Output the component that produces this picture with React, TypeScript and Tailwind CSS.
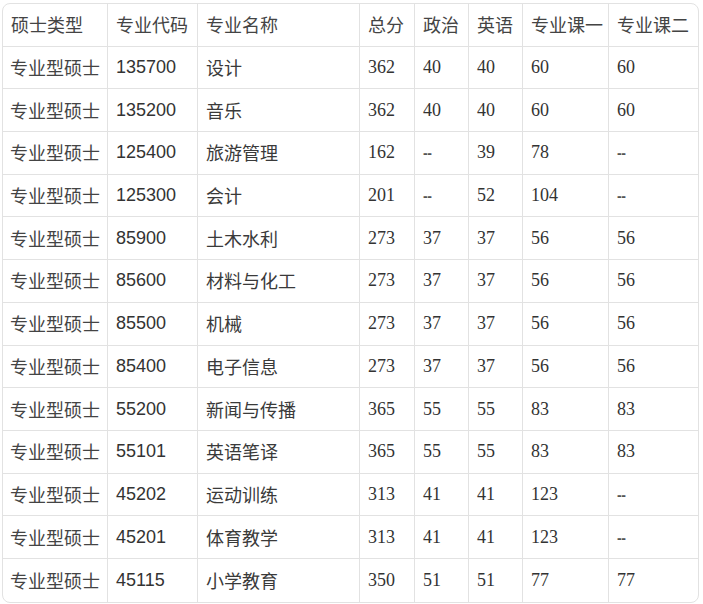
import React from "react"

type Row = {
  type: string
  code: string
  name: string
  total: string
  politics: string
  english: string
  course1: string
  course2: string
}

const rows: Row[] = [
  { type: "专业型硕士", code: "135700", name: "设计", total: "362", politics: "40", english: "40", course1: "60", course2: "60" },
  { type: "专业型硕士", code: "135200", name: "音乐", total: "362", politics: "40", english: "40", course1: "60", course2: "60" },
  { type: "专业型硕士", code: "125400", name: "旅游管理", total: "162", politics: "--", english: "39", course1: "78", course2: "--" },
  { type: "专业型硕士", code: "125300", name: "会计", total: "201", politics: "--", english: "52", course1: "104", course2: "--" },
  { type: "专业型硕士", code: "85900", name: "土木水利", total: "273", politics: "37", english: "37", course1: "56", course2: "56" },
  { type: "专业型硕士", code: "85600", name: "材料与化工", total: "273", politics: "37", english: "37", course1: "56", course2: "56" },
  { type: "专业型硕士", code: "85500", name: "机械", total: "273", politics: "37", english: "37", course1: "56", course2: "56" },
  { type: "专业型硕士", code: "85400", name: "电子信息", total: "273", politics: "37", english: "37", course1: "56", course2: "56" },
  { type: "专业型硕士", code: "55200", name: "新闻与传播", total: "365", politics: "55", english: "55", course1: "83", course2: "83" },
  { type: "专业型硕士", code: "55101", name: "英语笔译", total: "365", politics: "55", english: "55", course1: "83", course2: "83" },
  { type: "专业型硕士", code: "45202", name: "运动训练", total: "313", politics: "41", english: "41", course1: "123", course2: "--" },
  { type: "专业型硕士", code: "45201", name: "体育教学", total: "313", politics: "41", english: "41", course1: "123", course2: "--" },
  { type: "专业型硕士", code: "45115", name: "小学教育", total: "350", politics: "51", english: "51", course1: "77", course2: "77" },
]

const headers = ["硕士类型", "专业代码", "专业名称", "总分", "政治", "英语", "专业课一", "专业课二"]
const widths = ["w-[105px]", "w-[90px]", "w-[162px]", "w-[55px]", "w-[54px]", "w-[54px]", "w-[86px]", "w-[89px]"]

const cjk = "font-['Noto_Sans_CJK_SC',sans-serif]"
const sans = "font-['Liberation_Sans','Noto_Sans_CJK_SC',sans-serif]"
const serif = "font-['Liberation_Serif','Noto_Sans_CJK_SC',serif]"

const cell = "h-[42.7px] px-2 text-left align-middle border-b border-r border-[#e2e2e2] last:border-r-0 whitespace-nowrap"

function Score({ value }: { value: string }) {
  if (value === "--") {
    return (
      <span className="font-['Liberation_Sans',sans-serif] text-[14px] font-bold text-[#555] tracking-[-0.5px]">
        --
      </span>
    )
  }
  return <>{value}</>
}

export default function App() {
  return (
    <div className="bg-white w-[703px] h-[604px] pt-[3px] pl-[2px]">
      <div className="w-[697px] border border-[#e2e2e2] rounded-[8px] overflow-hidden">
        <table className="table-fixed border-separate border-spacing-0 w-full text-[18px] text-[#333]">
          <colgroup>
            {widths.map((w, i) => (
              <col key={i} className={w} />
            ))}
          </colgroup>
          <thead>
            <tr>
              {headers.map((h) => (
                <th key={h} className={`${cell} ${cjk} font-normal text-[#444]`}>
                  {h}
                </th>
              ))}
            </tr>
          </thead>
          <tbody className="[&>tr:last-child>td]:border-b-0">
            {rows.map((r) => (
              <tr key={r.code}>
                <td className={`${cell} ${cjk} pl-[7px] text-[#444]`}>{r.type}</td>
                <td className={`${cell} ${sans}`}>{r.code}</td>
                <td className={`${cell} ${cjk} text-[#3a3a3a]`}>{r.name}</td>
                <td className={`${cell} ${serif}`}><Score value={r.total} /></td>
                <td className={`${cell} ${serif}`}><Score value={r.politics} /></td>
                <td className={`${cell} ${serif}`}><Score value={r.english} /></td>
                <td className={`${cell} ${serif}`}><Score value={r.course1} /></td>
                <td className={`${cell} ${serif}`}><Score value={r.course2} /></td>
              </tr>
            ))}
          </tbody>
        </table>
      </div>
    </div>
  )
}
